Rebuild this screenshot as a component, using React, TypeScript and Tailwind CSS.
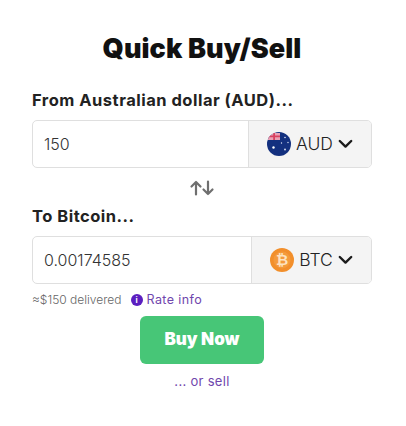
import React from "react";

function Chevron() {
  return (
    <svg width="15" height="10" viewBox="0 0 15 10" fill="none" stroke="#1c1c1c" strokeWidth="2.4" strokeLinecap="round" strokeLinejoin="round">
      <path d="M1.8 2 L7.5 7.6 L13.2 2" />
    </svg>
  );
}

function AusFlag() {
  return (
    <svg width="24" height="24" viewBox="0 0 24 24">
      <defs>
        <clipPath id="ausc"><circle cx="12" cy="12" r="12" /></clipPath>
      </defs>
      <g clipPath="url(#ausc)">
        <rect width="24" height="24" fill="#13307f" />
        <rect x="1" y="1" width="12" height="7" fill="#e8a0b4" />
        <path d="M1 3.6 H13 V5.2 H1 Z" fill="#d8405f" />
        <path d="M6.2 0 H8 V8 H6.2 Z" fill="#d8405f" />
        <circle cx="6.5" cy="15.5" r="1.2" fill="#fff" />
        <circle cx="18" cy="5.5" r="0.8" fill="#dfe6f5" />
        <circle cx="18" cy="17.5" r="0.9" fill="#dfe6f5" />
        <circle cx="14.5" cy="11" r="0.7" fill="#dfe6f5" />
        <circle cx="21" cy="10.5" r="0.7" fill="#dfe6f5" />
      </g>
    </svg>
  );
}

function BtcLogo() {
  return (
    <svg width="24" height="24" viewBox="0 0 24 24">
      <circle cx="12" cy="12" r="12" fill="#f28f2b" />
      <circle cx="12" cy="12" r="8.5" fill="#f49a3c" />
      <text x="12" y="17.4" textAnchor="middle" fontSize="15" fontWeight="700" fill="#fde3c0" fontFamily="'Liberation Sans', sans-serif">₿</text>
    </svg>
  );
}

function Arrows() {
  return (
    <svg width="26" height="16" viewBox="0 0 26 16" fill="none" stroke="#6f6f6f" strokeWidth="2.2" strokeLinecap="round" strokeLinejoin="round">
      <path d="M7 14.5 V2 M2.5 6.5 L7 2 L11.5 6.5" />
      <path d="M19 1.5 V14 M14.5 9.5 L19 14 L23.5 9.5" />
    </svg>
  );
}

function Row({ value, code, icon, selW }: { value: string; code: string; icon: React.ReactNode; selW: string }) {
  return (
    <div className="flex h-12 rounded-[5px] border border-[#dfdfdf] overflow-hidden">
      <div className="flex-1 flex items-center pl-[11px] text-[16px] font-light text-[#333]">{value}</div>
      <div className={`${selW} flex items-center justify-center gap-[5px] border-l border-[#dfdfdf] bg-[#f4f4f4]`}>
        {icon}
        <span className="text-[17.5px] font-light text-[#222]">{code}</span>
        <Chevron />
      </div>
    </div>
  );
}

export default function App() {
  return (
    <div className="w-[406px] h-[426px] bg-white pl-8 pr-[34px] pt-[31px] font-['Inter','Liberation_Sans',sans-serif]">
      <h1 className="text-center text-[27px] leading-9 font-black text-[#111] tracking-[0.1px]">Quick Buy/Sell</h1>
      <div className="mt-[21px] h-[24px] flex items-center text-[16.5px] font-bold text-[#222] tracking-[0.5px]">From Australian dollar (AUD)...</div>
      <div className="mt-[8px]">
        <Row value="150" code="AUD" icon={<AusFlag />} selW="w-[123px]" />
      </div>
      <div className="h-[40px] flex items-center justify-center">
        <Arrows />
      </div>
      <div className="-mt-[4px] h-[24px] flex items-center text-[16.5px] font-bold text-[#222] tracking-[0.5px]">To Bitcoin...</div>
      <div className="mt-[8px]">
        <Row value="0.00174585" code="BTC" icon={<BtcLogo />} selW="w-[120px]" />
      </div>
      <div className="mt-[9px] h-[14px] flex items-center text-[12px] font-light text-[#666]">
        <span>≈$150 delivered</span>
        <span className="ml-[9px] w-[12px] h-[12px] rounded-full bg-[#5b1fc0] text-white text-[8px] font-bold flex items-center justify-center">i</span>
        <span className="ml-[4px] text-[12.5px] font-normal text-[#7046ad] tracking-[0.4px]">Rate info</span>
      </div>
      <div className="mt-[9px] flex justify-center">
        <button className="w-[124px] h-12 rounded-[6px] bg-[#47c677] text-white text-[17px] font-black">Buy Now</button>
      </div>
      <div className="mt-[8px] text-center text-[13px] text-[#7046ad] tracking-[0.3px]">... or sell</div>
    </div>
  );
}
